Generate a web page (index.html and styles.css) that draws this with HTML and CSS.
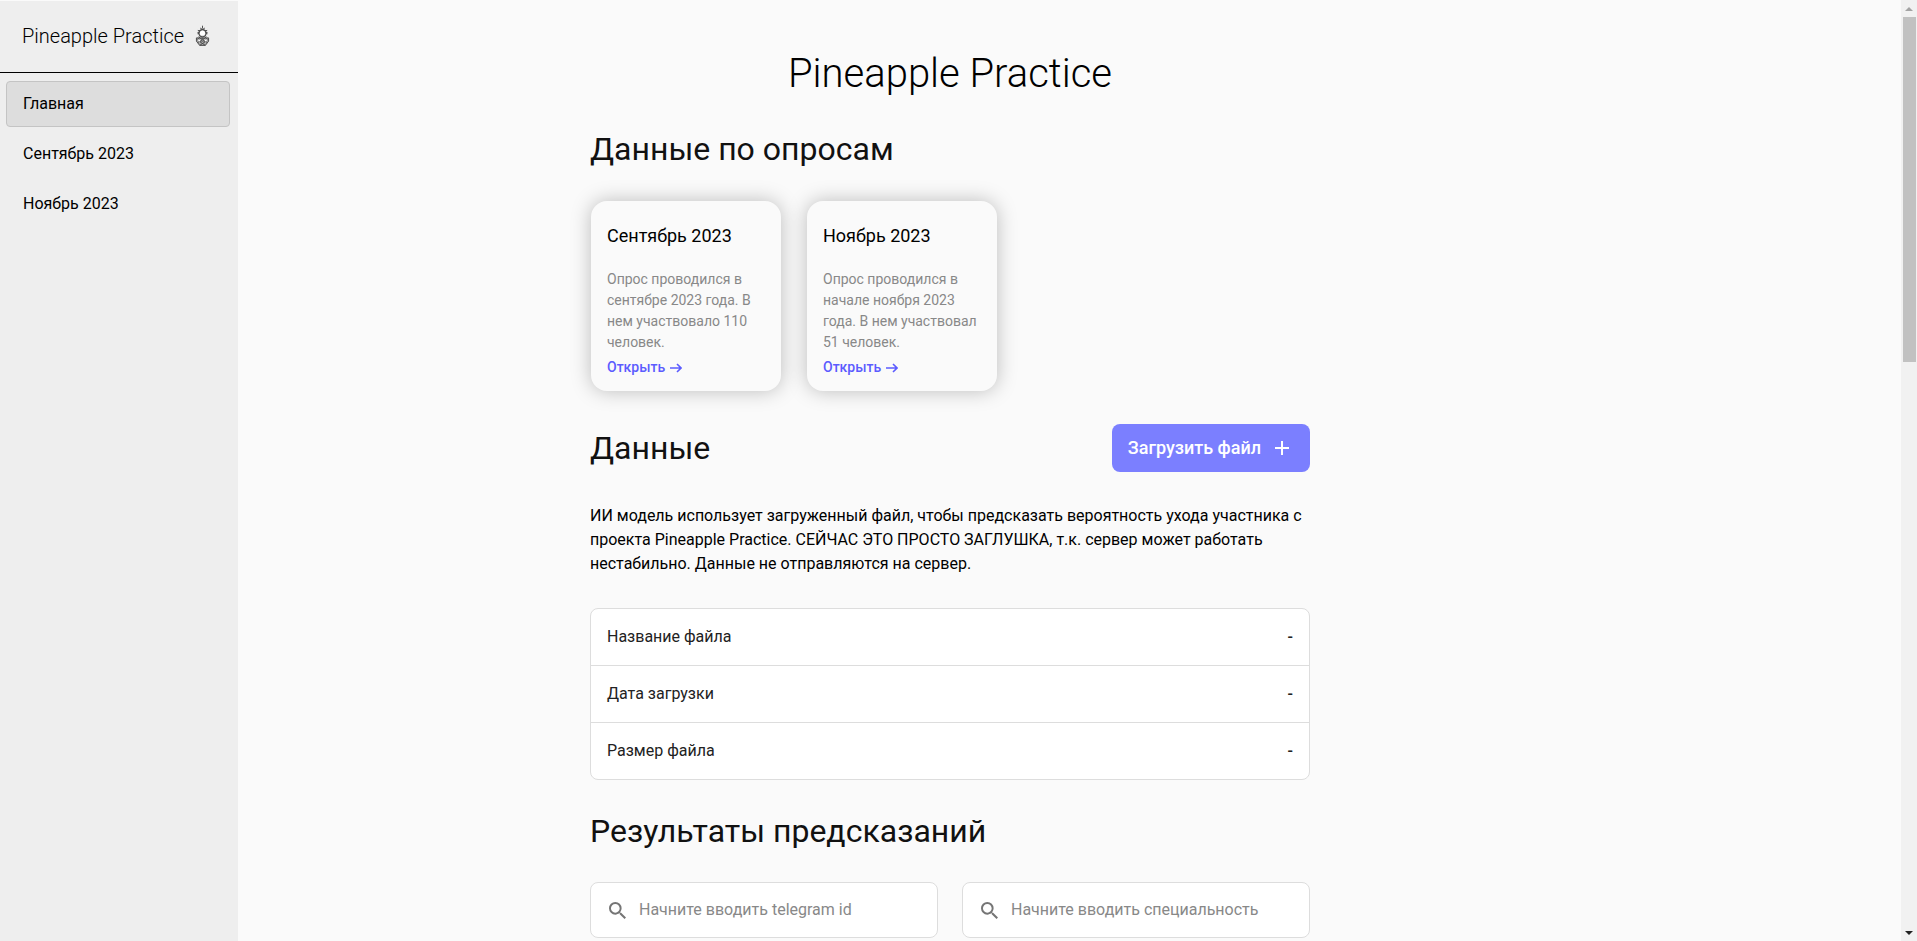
FILE: index.html
```html
<!DOCTYPE html>
<html lang="ru">
<head>
<meta charset="utf-8">
<title>Pineapple Practice</title>
<link rel="stylesheet" href="styles.css">
</head>
<body>
<div class="app">
  <aside class="sidebar">
    <div class="brand">
      <span>Pineapple Practice</span>
      <svg class="brand-icon" viewBox="0 0 16 24" aria-hidden="true">
        <circle cx="8" cy="9" r="4.500" fill="#888"/>
        <path d="M1.500 14h13v3.500L11 22H5l-3.500-4.500z" fill="#aaa"/>
        <g fill="none" stroke="#4a4a4a" stroke-width="1">
          <path d="M8 1v3M5.500 3.500 8 5l2.500-1.500M3 6l2.500.5L8 5l2.500 1.500L13 6M2.500 8.500l2 .5M13.500 8.500l-2 .5M3 10l2-3M13 10l-2-3"/>
          <circle cx="8" cy="9" r="4"/>
          <path d="M4 12.500 6 15h4l2-2.500M1.500 14h13v3.500L11 22H5l-3.500-4.500zM1.500 15.500l6.500 2 6.500-2M3 19l5-3.500 5 3.500M5 22l6-4M11 22l-6-4M3 14l3 4M13 14l-3 4"/>
        </g>
        <circle cx="8" cy="9" r="2.800" fill="#fff"/>
        <path d="M2.500 15.500l4 .5-2 2zM13.500 15.500l-4 .5 2 2z" fill="#fff"/>
      </svg>
    </div>
    <nav class="nav">
      <a class="nav-link nav-link-active" href="#">Главная</a>
      <a class="nav-link" href="#">Сентябрь 2023</a>
      <a class="nav-link" href="#">Ноябрь 2023</a>
    </nav>
  </aside>
  <main class="main">
    <div class="content">
      <h1 class="title">Pineapple Practice</h1>
      <h2 class="heading">Данные по опросам</h2>
      <div class="cards">
        <article class="card">
          <h3 class="card-title">Сентябрь 2023</h3>
          <p class="card-text">Опрос проводился в сентябре 2023 года. В нем участвовало 110 человек.</p>
          <a class="card-link" href="#">Открыть
            <svg class="arrow" viewBox="0 0 12 10" aria-hidden="true"><path d="M0 5h11M7 1l4 4-4 4"/></svg></a>
        </article>
        <article class="card">
          <h3 class="card-title">Ноябрь 2023</h3>
          <p class="card-text">Опрос проводился в начале ноября 2023 года. В нем участвовал 51 человек.</p>
          <a class="card-link" href="#">Открыть
            <svg class="arrow" viewBox="0 0 12 10" aria-hidden="true"><path d="M0 5h11M7 1l4 4-4 4"/></svg></a>
        </article>
      </div>
      <div class="data-head">
        <h2 class="heading">Данные</h2>
        <button class="upload" type="button">Загрузить файл
          <svg class="plus" viewBox="0 0 14 14" aria-hidden="true"><path d="M7 0v14M0 7h14"/></svg></button>
      </div>
      <p class="note">ИИ модель использует загруженный файл, чтобы предсказать вероятность ухода участника с проекта Pineapple Practice. СЕЙЧАС ЭТО ПРОСТО ЗАГЛУШКА, т.к. сервер может работать нестабильно. Данные не отправляются на сервер.</p>
      <table class="file">
        <tbody>
          <tr><th scope="row">Название файла</th><td>-</td></tr>
          <tr><th scope="row">Дата загрузки</th><td>-</td></tr>
          <tr><th scope="row">Размер файла</th><td>-</td></tr>
        </tbody>
      </table>
      <h2 class="heading">Результаты предсказаний</h2>
      <div class="filters">
        <label class="search">
          <svg class="search-icon" viewBox="3 3 17.500 17.500" aria-hidden="true"><path d="M15.500 14h-.79l-.28-.27A6.471 6.471 0 0 0 16 9.500 6.500 6.500 0 1 0 9.500 16c1.610 0 3.090-.59 4.230-1.570l.27.28v.79l5 4.990L20.490 19l-4.990-5zm-6 0C7.010 14 5 11.990 5 9.500S7.010 5 9.500 5 14 7.010 14 9.500 11.990 14 9.500 14z"/></svg>
          <input class="search-input" type="text" placeholder="Начните вводить telegram id" aria-label="Telegram id">
        </label>
        <label class="search">
          <svg class="search-icon" viewBox="3 3 17.500 17.500" aria-hidden="true"><path d="M15.500 14h-.79l-.28-.27A6.471 6.471 0 0 0 16 9.500 6.500 6.500 0 1 0 9.500 16c1.610 0 3.090-.59 4.230-1.570l.27.28v.79l5 4.990L20.490 19l-4.990-5zm-6 0C7.010 14 5 11.990 5 9.500S7.010 5 9.500 5 14 7.010 14 9.500 11.990 14 9.500 14z"/></svg>
          <input class="search-input" type="text" placeholder="Начните вводить специальность" aria-label="Специальность">
        </label>
      </div>
    </div>
  </main>
  <div class="scrollbar" aria-hidden="true">
    <svg class="scroll-arrow" viewBox="0 0 16 17"><path d="M4 11h8L8 7z" fill="#a3a3a3"/></svg>
    <div class="scroll-track"><div class="scroll-thumb"></div></div>
    <svg class="scroll-arrow" viewBox="0 0 16 17"><path d="M4 7h8l-4 4z" fill="#222"/></svg>
  </div>
</div>
</body>
</html>
```
FILE: styles.css
```css
* {
  box-sizing: border-box;
}

body {
  margin: 0;
  background: #fafafa;
  color: #000;
  font: 16px/24px Roboto, "Liberation Sans", sans-serif;
}

h1, h2, h3, p {
  margin: 0;
  font-weight: 400;
}

a {
  color: inherit;
  text-decoration: none;
}

.app {
  display: grid;
  grid-template-columns: 238px 1fr 239px 16px;
  min-height: 100vh;
}

.sidebar {
  background: #eee;
  border-top: 1px solid #fafafa;
}

.brand {
  display: flex;
  align-items: center;
  gap: 11px;
  height: 72px;
  padding: 0 22px 1px;
  border-bottom: 1px solid #000;
  font-size: 20px;
  font-weight: 300;
}

.brand-icon {
  width: 15px;
  height: 24px;
}

.nav {
  display: flex;
  flex-direction: column;
  gap: 4px;
  padding: 8px 8px 8px 6px;
}

.nav-link {
  padding: 10px 16px;
  border: 1px solid transparent;
  border-radius: 4px;
}

.nav-link-active {
  background: #ddd;
  border-color: #c4c4c4;
}

.main {
  display: flex;
  justify-content: center;
}

.content {
  width: 720px;
  padding-top: 50px;
}

.title {
  font-size: 40px;
  line-height: 48px;
  font-weight: 300;
  text-align: center;
}

.heading {
  color: #111;
  font-size: 32px;
  line-height: 40px;
}

.title + .heading {
  margin-top: 31px;
}

.cards {
  display: flex;
  gap: 26px;
  margin-top: 32px;
  padding: 0 1px;
}

.card {
  width: 190px;
  height: 190px;
  padding: 23px 16px 0;
  border-radius: 16px;
  background: #fafafa;
  box-shadow: 0 0 20px rgba(0, 0, 0, 0.25);
}

.card-title {
  font-size: 18px;
}

.card-text {
  margin-top: 21px;
  color: #888;
  font-size: 14px;
  line-height: 21px;
}

.card-link {
  display: flex;
  align-items: center;
  gap: 5px;
  margin-top: 4px;
  color: #5c5cff;
  font-size: 14px;
  line-height: 21px;
  font-weight: 500;
}

.arrow {
  width: 12px;
  height: 10px;
  fill: none;
  stroke: currentColor;
  stroke-width: 1.6;
}

.data-head {
  display: flex;
  align-items: center;
  justify-content: space-between;
  margin-top: 33px;
}

.upload {
  display: flex;
  align-items: center;
  gap: 14px;
  height: 48px;
  padding: 0 21px 0 16px;
  border: 0;
  border-radius: 8px;
  background: #7b7fff;
  color: #fff;
  font: 500 18px/24px Roboto, "Liberation Sans", sans-serif;
}

.plus {
  width: 14px;
  height: 14px;
  stroke: currentColor;
  stroke-width: 2;
}

.note {
  margin-top: 32px;
}

.file {
  width: 100%;
  margin: 32px 0 31px;
  border: 1px solid #ddd;
  border-radius: 8px;
  border-spacing: 0;
  background: #fff;
}

.file th,
.file td {
  height: 56px;
  padding: 0 16px;
  color: #222;
  font-weight: 400;
  text-align: left;
}

.file td {
  font-weight: 500;
  text-align: right;
}

.file tr + tr th,
.file tr + tr td {
  height: 57px;
  border-top: 1px solid #ddd;
}

.filters {
  display: grid;
  grid-template-columns: 1fr 1fr;
  gap: 24px;
  margin-top: 31px;
}

.search {
  display: flex;
  align-items: center;
  gap: 13px;
  height: 56px;
  padding: 0 16px 0 18px;
  border: 1px solid #ddd;
  border-radius: 8px;
  background: #fff;
}

.search-icon {
  flex: none;
  width: 17px;
  height: 17px;
  fill: #757575;
}

.search-input {
  flex: 1;
  min-width: 0;
  padding: 0;
  border: 0;
  outline: 0;
  background: none;
  color: #222;
  font: inherit;
}

.search-input::placeholder {
  color: #888;
}

.scrollbar {
  grid-column: 4;
  display: flex;
  flex-direction: column;
  background: #f1f1f1;
}

.scroll-arrow {
  width: 16px;
  height: 17px;
}

.scroll-track {
  flex: 1;
  padding: 0 1px 0 2px;
}

.scroll-thumb {
  height: 38%;
  background: #c1c1c1;
}
```
